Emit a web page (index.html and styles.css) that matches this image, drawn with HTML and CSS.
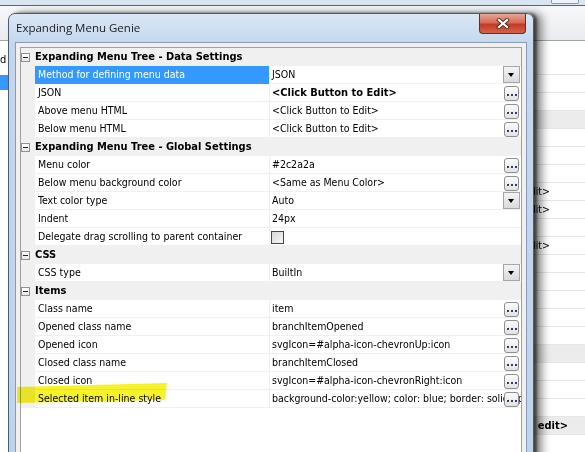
FILE: index.html
```html
<!DOCTYPE html>
<html lang="en">
<head>
  <meta charset="UTF-8">
  <title>Expanding Menu Genie</title>
  <link rel="stylesheet" href="styles.css">
</head>
<body>

<div class="desk">
  <div class="desk-top"><span class="desk-btn"></span></div>
  <div class="desk-tools"></div>
  <div class="desk-main">
    <div class="desk-list">
      <div class="item">d</div>
      <div class="item sel"></div>
    </div>
    <div class="desk-grid">
      <div class="r"></div>
      <div class="r"></div>
      <div class="r"></div>
      <div class="r band"></div>
      <div class="r"></div>
      <div class="r"></div>
      <div class="r"></div>
      <div class="r">&lt;Click Button to Edit&gt;</div>
      <div class="r">&lt;Click Button to Edit&gt;</div>
      <div class="r"></div>
      <div class="r">&lt;Click Button to Edit&gt;</div>
      <div class="r"></div>
      <div class="r"></div>
      <div class="r"></div>
      <div class="r"></div>
      <div class="r"></div>
      <div class="r band"></div>
      <div class="r"></div>
      <div class="r"></div>
      <div class="r"></div>
      <div class="r band strong">&lt;Click button to edit&gt;</div>
    </div>
  </div>
</div>

<div class="dialog">
  <div class="titlebar">
    <span class="title">Expanding Menu Genie</span>
    <span class="close">
      <svg width="14" height="11" viewBox="0 0 14 11">
        <path d="M3 2 L11 9 M11 2 L3 9" stroke="#5a2a22" stroke-width="4" stroke-linecap="square"/>
        <path d="M3 2 L11 9 M11 2 L3 9" stroke="#ffffff" stroke-width="2.2" stroke-linecap="square"/>
      </svg>
    </span>
  </div>

  <div class="client">
    <div class="grid">

      <div class="cat"><span class="gut"><span class="toggle"></span></span>Expanding Menu Tree - Data Settings</div>
      <div class="row selected">
        <span class="gut"></span>
        <div class="name">Method for defining menu data</div>
        <div class="value">JSON<span class="drop"></span></div>
      </div>
      <div class="row">
        <span class="gut"></span>
        <div class="name">JSON</div>
        <div class="value bold">&lt;Click Button to Edit&gt;<span class="dots"></span></div>
      </div>
      <div class="row">
        <span class="gut"></span>
        <div class="name">Above menu HTML</div>
        <div class="value">&lt;Click Button to Edit&gt;<span class="dots"></span></div>
      </div>
      <div class="row">
        <span class="gut"></span>
        <div class="name">Below menu HTML</div>
        <div class="value">&lt;Click Button to Edit&gt;<span class="dots"></span></div>
      </div>

      <div class="cat"><span class="gut"><span class="toggle"></span></span>Expanding Menu Tree - Global Settings</div>
      <div class="row">
        <span class="gut"></span>
        <div class="name">Menu color</div>
        <div class="value">#2c2a2a<span class="dots"></span></div>
      </div>
      <div class="row">
        <span class="gut"></span>
        <div class="name">Below menu background color</div>
        <div class="value">&lt;Same as Menu Color&gt;<span class="dots"></span></div>
      </div>
      <div class="row">
        <span class="gut"></span>
        <div class="name">Text color type</div>
        <div class="value">Auto<span class="drop"></span></div>
      </div>
      <div class="row">
        <span class="gut"></span>
        <div class="name">Indent</div>
        <div class="value">24px</div>
      </div>
      <div class="row">
        <span class="gut"></span>
        <div class="name">Delegate drag scrolling to parent container</div>
        <div class="value"><span class="check"></span></div>
      </div>

      <div class="cat"><span class="gut"><span class="toggle"></span></span>CSS</div>
      <div class="row">
        <span class="gut"></span>
        <div class="name">CSS type</div>
        <div class="value">BuiltIn<span class="drop"></span></div>
      </div>

      <div class="cat"><span class="gut"><span class="toggle"></span></span>Items</div>
      <div class="row">
        <span class="gut"></span>
        <div class="name">Class name</div>
        <div class="value">item<span class="dots"></span></div>
      </div>
      <div class="row">
        <span class="gut"></span>
        <div class="name">Opened class name</div>
        <div class="value">branchItemOpened<span class="dots"></span></div>
      </div>
      <div class="row">
        <span class="gut"></span>
        <div class="name">Opened icon</div>
        <div class="value">svgIcon=#alpha-icon-chevronUp:icon<span class="dots"></span></div>
      </div>
      <div class="row">
        <span class="gut"></span>
        <div class="name">Closed class name</div>
        <div class="value">branchItemClosed<span class="dots"></span></div>
      </div>
      <div class="row">
        <span class="gut"></span>
        <div class="name">Closed icon</div>
        <div class="value">svgIcon=#alpha-icon-chevronRight:icon<span class="dots"></span></div>
      </div>
      <div class="row">
        <span class="gut"></span>
        <div class="name">Selected item in-line style</div>
        <div class="value">background-color:yellow; color: blue; border: solid 1px red;<span class="dots"></span></div>
      </div>

    </div>
  </div>
</div>

<div class="marker"></div>

</body>
</html>
```

FILE: styles.css
```css
* { margin: 0; padding: 0; box-sizing: border-box; }
body {
  width: 585px;
  height: 452px;
  overflow: hidden;
  position: relative;
  background: #fff;
  color: #000;
  font-family: 'DejaVu Sans Condensed', 'DejaVu Sans', sans-serif;
  font-size: 10.5px;
}

/* app window behind the dialog */
.desk {
  display: flex;
  flex-direction: column;
  height: 452px;
}
.desk-top {
  flex: none;
  height: 6px;
  background: #dae5f2;
  border-bottom: 1px solid #5d6670;
  display: flex;
  justify-content: flex-end;
}
.desk-btn {
  width: 28px;
  height: 4px;
  margin-right: 6px;
  border: 1px solid #8c99a8;
  border-top: none;
  border-radius: 0 0 2px 2px;
  background: #eef3f9;
}
.desk-tools {
  flex: none;
  height: 35px;
  background: linear-gradient(#f7f8fa, #e9ebee);
  border-bottom: 1px solid #a0a4a8;
}
.desk-main {
  flex: 1;
  display: flex;
  min-width: 0;
}
.desk-list {
  flex: 0 0 8px;
  min-width: 0;
  padding-top: 11px;
}
.desk-list .item {
  height: 15px;
  line-height: 15px;
  font-size: 11px;
}
.desk-list .item.sel {
  margin-top: 8px;
  background: #3399ff;
}
.desk-grid {
  flex: 1;
  min-width: 0;
  padding-top: 16px;
}
.desk-grid .r {
  height: 18px;
  line-height: 17px;
  border-bottom: 1px solid #e6e6e6;
  text-align: right;
  padding-right: 35px;
  white-space: nowrap;
  overflow: hidden;
}
.desk-grid .r.band { background: #ececec; }
.desk-grid .r.strong {
  font-weight: bold;
  font-size: 11px;
  padding-right: 17px;
}

/* dialog window */
.dialog {
  position: absolute;
  left: 8px;
  top: 13px;
  width: 526px;
  height: 460px;
  border: 1px solid #4c5b6e;
  border-radius: 7px 7px 0 0;
  background: linear-gradient(#dae7f5, #c3d7ee 30px, #bed3ec);
  box-shadow: 3px 0 3px rgba(0, 0, 0, 0.55), 8px 0 9px rgba(0, 0, 0, 0.45);
  display: flex;
  flex-direction: column;
}
.titlebar {
  flex: none;
  height: 28px;
  display: flex;
  justify-content: space-between;
  align-items: flex-start;
  padding-left: 7px;
}
.title {
  font-family: 'Open Sans', 'Noto Sans', sans-serif;
  font-size: 11.5px;
  color: #1b1b1b;
  line-height: 28px;
}
.close {
  width: 47px;
  height: 20px;
  margin-right: 7px;
  border: 1px solid #6b2b22;
  border-top: none;
  border-radius: 0 0 4px 4px;
  background: linear-gradient(#e6a898, #d66a55 45%, #c23b22 55%, #d5634a);
  display: flex;
  align-items: center;
  justify-content: center;
}
.client {
  flex: 1;
  min-width: 0;
  margin: 0 6px;
  border: 1px solid #8b9cb2;
  border-bottom: none;
  background: #f0f0f0;
  padding: 4px 4px 0 4px;
  display: flex;
}

/* property grid */
.grid {
  flex: 1;
  min-width: 0;
  background: #fff;
  border: 1px solid #a0a0a0;
  border-bottom: none;
}
.gut {
  flex: none;
  width: 14px;
  background: #f0f0f0;
  display: flex;
  align-items: center;
}
.toggle {
  position: relative;
  width: 9px;
  height: 9px;
  border: 1px solid #919191;
  background: linear-gradient(#ffffff, #e8e8e8);
}
.toggle::before {
  content: '';
  position: absolute;
  left: 1px;
  top: 3px;
  width: 5px;
  height: 1px;
  background: #222;
}
.cat {
  display: flex;
  height: 18px;
  line-height: 18px;
  background: #f0f0f0;
  font-weight: bold;
  font-size: 11px;
}
.row {
  display: flex;
  height: 18px;
}
.name {
  flex: none;
  width: 234px;
  padding-left: 3px;
  line-height: 17px;
  border-bottom: 1px solid #f0f0f0;
  white-space: nowrap;
  overflow: hidden;
}
.row.selected .name {
  background: #3399ff;
  color: #fff;
  border-bottom-color: #3399ff;
}
.value {
  flex: 1;
  min-width: 0;
  position: relative;
  padding-left: 2px;
  line-height: 17px;
  border-left: 1px solid #f0f0f0;
  border-bottom: 1px solid #f0f0f0;
  white-space: nowrap;
  overflow: hidden;
}
.value.bold { font-weight: bold; font-size: 11px; }

.dots {
  position: absolute;
  right: 2px;
  top: 2px;
  width: 15px;
  height: 15px;
  border: 1px solid #8e8f8f;
  border-radius: 3px;
  background: linear-gradient(#fbfbfb, #e2e2e2);
}
.dots::before {
  content: '';
  position: absolute;
  left: 2px;
  top: 7px;
  width: 2px;
  height: 2px;
  background: #2a3f6e;
  box-shadow: 4px 0 #2a3f6e, 8px 0 #2a3f6e;
}
.drop {
  position: absolute;
  right: 1px;
  top: 0;
  width: 17px;
  height: 17px;
  border: 1px solid #a6a6a6;
  background: linear-gradient(#f4f4f4, #dadada);
}
.drop::before {
  content: '';
  position: absolute;
  left: 4px;
  top: 6px;
  border-left: 3.5px solid transparent;
  border-right: 3.5px solid transparent;
  border-top: 4px solid #000;
}
.check {
  display: block;
  width: 13px;
  height: 13px;
  margin: 3px 0 0 -1px;
  border: 1px solid #1c5180;
  background: linear-gradient(135deg, #d8d8d8, #f6f6f6);
}

/* hand-drawn highlight over the last row */
.marker {
  position: absolute;
  left: 17px;
  top: 383px;
  width: 150px;
  height: 20px;
  background: #f6f22a;
  mix-blend-mode: multiply;
  clip-path: polygon(0 4px, 100% 0, 98.5% 17px, 0 20px);
}
```
